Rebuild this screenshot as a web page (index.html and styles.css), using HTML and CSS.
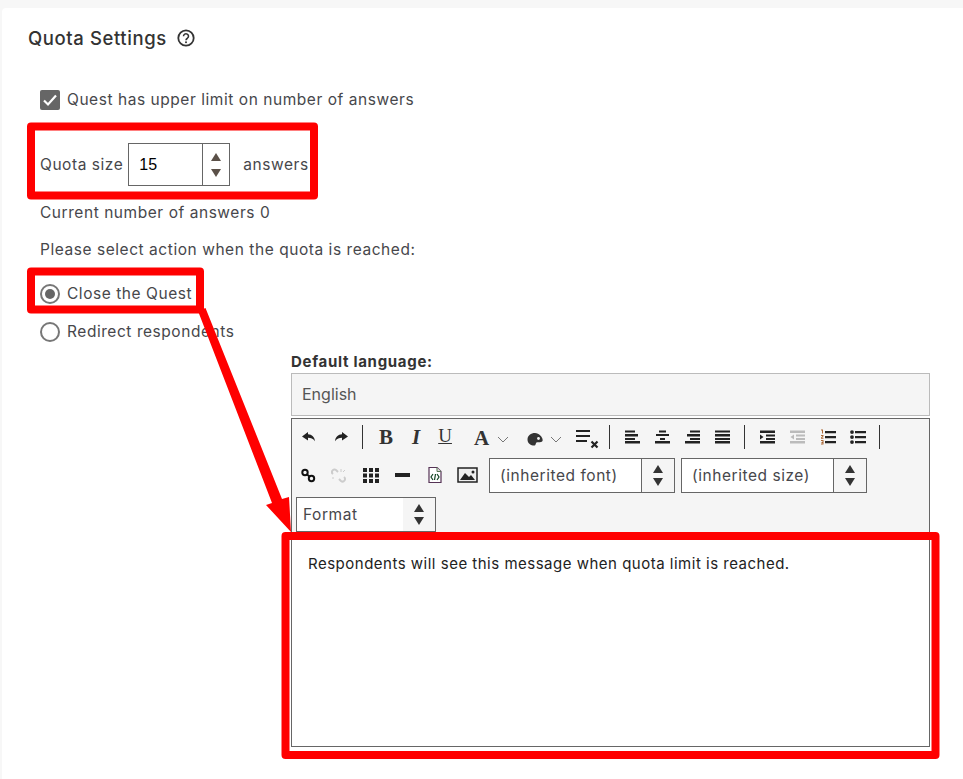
FILE: index.html
```html
<!DOCTYPE html>
<html lang="en">
<head>
<meta charset="utf-8">
<title>Quota Settings</title>
<link rel="stylesheet" href="styles.css">
</head>
<body>
<main class="card">
  <header class="title-row">
    <h1 class="title">Quota Settings</h1>
    <svg class="help" width="18" height="18" viewBox="0 0 18 18"><circle cx="9" cy="9" r="7.7" fill="none" stroke="#333" stroke-width="1.8"/><path d="M6.500 7.200a2.500 2.400 0 1 1 3.900 2c-1 .6-1.400 1-1.400 2" fill="none" stroke="#333" stroke-width="1.600"/><circle cx="9" cy="13.200" r="1" fill="#333"/></svg>
  </header>
  <div class="opt check-row">
    <span class="checkbox"><svg width="20" height="20" viewBox="0 0 20 20"><path d="M4 10.500l4 4 8-9" fill="none" stroke="#fff" stroke-width="2.200"/></svg></span>
    <span class="lbl">Quest has upper limit on number of answers</span>
  </div>
  <div class="quota-row">
    <span>Quota size</span>
    <span class="spinner">
      <span class="spinner-value">15</span>
      <span class="spinner-arrows"><i class="up"></i><i class="down"></i></span>
    </span>
    <span class="unit">answers</span>
  </div>
  <p class="line current">Current number of answers 0</p>
  <p class="line please">Please select action when the quota is reached:</p>
  <div class="opt radio-row first"><span class="radio on"></span><span class="lbl">Close the Quest</span></div>
  <div class="opt radio-row"><span class="radio"></span><span class="lbl">Redirect respondents</span></div>
  <section class="editor-wrap">
    <div class="lang-label">Default language:</div>
    <div class="lang-box">English</div>
    <div class="editor">
      <div class="toolbar">
        <div class="tb-row r1">
          <svg class="i" width="16" height="16" viewBox="0 0 16 16"><path d="M7 3L1 7.500 7 11.500V8.800c3 0 5 .8 7 3.400C13.500 8 11 5.600 7 5.300z" fill="#222"/></svg>
          <svg class="i i2" width="16" height="16" viewBox="0 0 16 16"><path d="M9 3l6 4.500-6 4V8.800c-3 0-5 .8-7 3.400C2.500 8 5 5.600 9 5.300z" fill="#222"/></svg>
          <span class="sep s1"></span>
          <span class="glyph b">B</span>
          <span class="glyph it">I</span>
          <span class="glyph u">U</span>
          <span class="glyph a">A</span>
          <svg class="chev" width="12" height="7" viewBox="0 0 12 7"><path d="M1 1l5 5 5-5" fill="none" stroke="#777"/></svg>
          <svg class="i pal" width="16" height="14" viewBox="0 0 16 14"><path d="M8 1C4 1 .5 3.500.5 7.500S4 13.500 7 13.500c2 0 1.500-2.200 2.500-3s4.500.5 6-1.500C16.500 6 12.500 1 8 1z" fill="#333"/><circle cx="11.500" cy="6.500" r="1.400" fill="#f5f5f5"/></svg>
          <svg class="chev" width="12" height="7" viewBox="0 0 12 7"><path d="M1 1l5 5 5-5" fill="none" stroke="#777"/></svg>
          <svg class="i clear" width="23" height="20" viewBox="0 0 23 20"><path d="M0 1h14v2H0zM0 6h14v2H0zM0 11h11v2H0z" fill="#222"/><path d="M15.500 12.500l6 6M21.500 12.500l-6 6" stroke="#222" stroke-width="2.200"/></svg>
          <span class="sep s2"></span>
          <svg class="i al" width="16" height="14" viewBox="0 0 16 14"><path d="M0 .5h10v2H0zM0 4h13v2.500H0zM0 8h10v2H0zM0 11h15v2.500H0z" fill="#222"/></svg>
          <svg class="i al" width="16" height="14" viewBox="0 0 16 14"><path d="M4 .5h7v2H4zM1 4h13v2H1zM5 8h5v2H5zM0 11h15v2.500H0z" fill="#222"/></svg>
          <svg class="i al" width="16" height="14" viewBox="0 0 16 14"><path d="M5 .5h10v2H5zM2 4h13v2.500H2zM5 8h10v2H5zM0 11h15v2.500H0z" fill="#222"/></svg>
          <svg class="i al" width="16" height="14" viewBox="0 0 16 14"><path d="M0 .5h15v2H0zM0 4h15v2.500H0zM0 8h15v2H0zM0 11h15v2.500H0z" fill="#222"/></svg>
          <span class="sep s3"></span>
          <svg class="i ind" width="16" height="14" viewBox="0 0 16 14"><path d="M0 .5h15v2.500H0zM6 4.500h9v2H6zM6 8h9v2H6zM0 11h15v2.500H0zM0 4.500l3.500 2.500L0 9.500z" fill="#222"/></svg>
          <svg class="i al off" width="16" height="14" viewBox="0 0 16 14"><path d="M0 .5h15v2.500H0zM6 4.500h9v2H6zM6 8h9v2H6zM0 11h15v2.500H0zM4 4.500L.5 7 4 9.500z" fill="#bbb"/></svg>
          <svg class="i al" width="16" height="16" viewBox="0 0 16 16"><path d="M5 2h11v2.200H5zM5 7h11v2.200H5zM5 12h11v2.200H5z" fill="#222"/><path d="M1 .5h2v4H2V1.500H1zM1 6h2.500v1.200L2 8.800h1.500v1H1v-1l1.500-1.700H1zM1 11h2.500v4.500H1v-1h1.500V14h-1v-1h1v-1H1z" fill="#a63"/></svg>
          <svg class="i al" width="16" height="14" viewBox="0 0 16 14"><path d="M5 1h11v2.200H5zM5 6h11v2.200H5zM5 11h11v2.200H5z" fill="#222"/><circle cx="2" cy="2.100" r="1.900" fill="#222"/><circle cx="2" cy="7.100" r="1.900" fill="#222"/><circle cx="2" cy="12.100" r="1.900" fill="#222"/></svg>
          <span class="sep s4"></span>
        </div>
        <div class="tb-row r2">
          <svg class="i" width="15" height="15" viewBox="0 0 15 15"><g fill="none" stroke="#111" stroke-width="2"><circle cx="4" cy="4.500" r="2.700"/><circle cx="10.500" cy="10.500" r="2.700"/><path d="M6 6.500l2.500 2"/></g></svg>
          <svg class="i unlink" width="15" height="15" viewBox="0 0 15 15"><g fill="none" stroke="#ccc" stroke-width="2"><path d="M2 6a2.500 2.500 0 0 1 3-4l2 2M13 9a2.500 2.500 0 0 1-3 4l-2-2"/><path d="M1 10h2M10 1v3M12 4l2-2" stroke-width="1"/></g></svg>
          <svg class="i tbl" width="16" height="16" viewBox="0 0 16 16"><path d="M0 1h4v4H0zM6 1h4v4H6zM12 1h4v4h-4zM0 6.500h4v4H0zM6 6.500h4v4H6zM12 6.500h4v4h-4zM0 12h4v4H0zM6 12h4v4H6zM12 12h4v4h-4z" fill="#222"/></svg>
          <svg class="i hr" width="16" height="4" viewBox="0 0 16 4"><rect width="15" height="4" y="0" fill="#222"/></svg>
          <svg class="i src" width="14" height="16" viewBox="0 0 14 16"><path d="M1 .5h8l4 4v11H1z" fill="#fff" stroke="#535" stroke-width="1.200"/><path d="M9 .5v4h4" fill="#ddd" stroke="#575"/><path d="M5 7L3 10l2 3M9 7l2 3-2 3M7.500 7l-1 6" fill="none" stroke="#142" stroke-width="1.200"/></svg>
          <svg class="i img" width="21" height="16" viewBox="0 0 21 16"><rect x="1" y="1" width="19" height="14" fill="#eee" stroke="#222" stroke-width="1.500"/><path d="M3 13l5-7 4 4 2-2 4 5z" fill="#222"/><circle cx="16" cy="5" r="1.500" fill="#222"/></svg>
          <span class="sel s-font"><span class="sel-val">(inherited font)</span><span class="sel-arrows"><i class="up"></i><i class="down"></i></span></span>
          <span class="sel s-size"><span class="sel-val">(inherited size)</span><span class="sel-arrows"><i class="up"></i><i class="down"></i></span></span>
        </div>
        <div class="tb-row r3">
          <span class="sel s-format"><span class="sel-val">Format</span><span class="sel-arrows flat"><i class="up"></i><i class="down"></i></span></span>
        </div>
      </div>
      <div class="content">Respondents will see this message when quota limit is reached.</div>
    </div>
  </section>
</main>
<svg class="annot" width="963" height="779" viewBox="0 0 963 779">
  <g fill="none" stroke="#ff0000" stroke-width="8" stroke-linejoin="round">
    <rect x="31" y="126.500" width="283" height="69"/>
    <rect x="31" y="271.500" width="169" height="38"/>
    <rect x="285.500" y="536" width="650" height="219"/>
  </g>
  <path d="M198 311L205.500 308L282 499L289 497L291 532L266 505L272 503z" fill="#ff0000"/>
</svg>
</body>
</html>
```

FILE: styles.css
```css
* { box-sizing: border-box; }
html, body { margin: 0; padding: 0; }
body {
  width: 963px;
  height: 779px;
  overflow: hidden;
  background: #f7f7f7;
  padding: 8px 0 0 2px;
  font-family: "Inter", "Liberation Sans", sans-serif;
  font-size: 15.5px;
  letter-spacing: 0.55px;
  color: #47474b;
  position: relative;
}
.card {
  background: #fff;
  border-radius: 4px 0 0 0;
  height: 771px;
  padding-left: 38px;
}
.title-row {
  display: flex;
  align-items: center;
  height: 60px;
  margin-left: -12px;
}
.title {
  margin: 0;
  font-size: 18.5px;
  font-weight: 500;
  letter-spacing: 0.6px;
  color: #333;
}
.help { margin-left: 10px; }
.opt { display: flex; align-items: center; }
.lbl { padding-bottom: 2px; }
.check-row { margin-top: 22px; height: 20px; gap: 7px; }
.checkbox {
  width: 20px; height: 20px;
  background: #666; border-radius: 2px;
  display: block;
}
.checkbox svg { display: block; }
.quota-row {
  display: flex;
  align-items: center;
  margin-top: 33px;
  height: 43px;
}
.spinner {
  display: flex;
  width: 102px; height: 43px;
  margin-left: 5px;
  border: 1px solid #666;
}
.spinner-value {
  width: 74px;
  padding-left: 10px;
  line-height: 41px;
  font-family: "Liberation Sans", sans-serif;
  font-size: 16px;
  letter-spacing: 0;
  color: #000;
  border-right: 1px solid #666;
}
.spinner-arrows, .sel-arrows {
  flex: 1;
  display: flex;
  flex-direction: column;
  align-items: center;
  justify-content: center;
  gap: 5px;
}
.spinner-arrows { gap: 8px; }
.up, .down {
  display: block;
  width: 0; height: 0;
  border-left: 5px solid transparent;
  border-right: 5px solid transparent;
}
.up { border-bottom: 8px solid #5b5048; }
.down { border-top: 8px solid #5b5048; }
.unit { margin-left: 13px; }
.line { margin: 0; line-height: 20px; }
.current { margin-top: 17px; }
.please { margin-top: 17px; }
.radio-row { height: 22px; gap: 7px; margin-top: 16px; }
.radio-row.first { margin-top: 23px; }
.radio {
  width: 20px; height: 20px;
  border: 2px solid #777;
  border-radius: 50%;
  background: #fff;
  position: relative;
  display: block;
}
.radio.on::after {
  content: "";
  position: absolute;
  left: 3px; top: 3px;
  width: 10px; height: 10px;
  border-radius: 50%;
  background: #666;
}
.editor-wrap { margin-left: 251px; width: 639px; margin-top: 9px; }
.lang-label { font-size: 15px; font-weight: 700; letter-spacing: 0.7px; line-height: 20px; color: #333; }
.lang-box {
  margin-top: 1px;
  height: 43px;
  padding-left: 10px;
  background: #f5f5f5;
  border: 1px solid #bbb;
  line-height: 41px;
  font-size: 16px;
  letter-spacing: 0;
  color: #555;
}
.editor {
  margin-top: 2px;
  height: 329px;
  border: 1px solid #666;
  display: flex;
  flex-direction: column;
}
.toolbar { background: #f5f5f5; height: 116px; padding: 0 4px; flex: none; }
.content {
  flex: 1;
  background: #fff;
  padding: 20px 16px;
  font-size: 15px;
  letter-spacing: 0.5px;
  line-height: 18px;
  color: #222;
}
.tb-row { display: flex; align-items: center; }
.r1 { height: 36px; padding-left: 5px; }
.r2 { height: 36px; margin-top: 2px; padding-left: 5px; }
.r3 { height: 36px; margin-top: 3px; }
.i { flex: none; display: block; }
.i2 { margin-left: 16px; }
.sep { width: 1px; height: 24px; background: #333; flex: none; }
.s1 { margin-left: 13px; margin-right: 16px; }
.glyph { font-family: "Liberation Serif", serif; font-size: 21px; color: #333; flex: none; letter-spacing: 0; }
.b { font-weight: 700; }
.it { font-style: italic; font-weight: 700; margin-left: 19px; }
.u { text-decoration: underline; font-size: 19px; margin-left: 18px; margin-top: -3px; }
.a { font-weight: 700; margin-left: 22px; margin-top: 3px; }
.chev { margin-left: 8px; margin-top: 4px; flex: none; }
.pal { margin-left: 18px; margin-top: 3px; }
.pal + .chev { margin-left: 7px; }
.clear { margin-left: 14px; margin-top: 4px; }
.s2 { margin-left: 10px; margin-right: 15px; }
.al { margin-left: 14px; }
.s2 + .al { margin-left: 0; }
.s3 { margin-left: 13px; margin-right: 15px; }
.ind { margin-left: 0; }
.s4 { margin-left: 13px; }
.unlink { margin-left: 15px; }
.tbl { margin-left: 17px; }
.hr { margin-left: 16px; }
.src { margin-left: 17px; }
.img { margin-left: 15px; }
.sel {
  display: flex;
  height: 35px;
  border: 1px solid #666;
  background: #f5f5f5;
  flex: none;
}
.sel-val {
  background: #fff;
  padding-left: 10px;
  line-height: 33px;
  border-right: 1px solid #666;
  white-space: nowrap;
}
.sel .up { border-bottom-color: #333; }
.sel .down { border-top-color: #333; }
.s-font { width: 186px; margin-left: 11px; }
.s-font .sel-val { width: 152px; }
.s-size { width: 186px; margin-left: 6px; }
.s-size .sel-val { width: 152px; }
.s-format { width: 140px; }
.s-format .sel-val { width: 106px; padding-left: 6px; border-right: 0; }
.flat { background: #f5f5f5; }
.annot { position: absolute; left: 0; top: 0; pointer-events: none; }
```
